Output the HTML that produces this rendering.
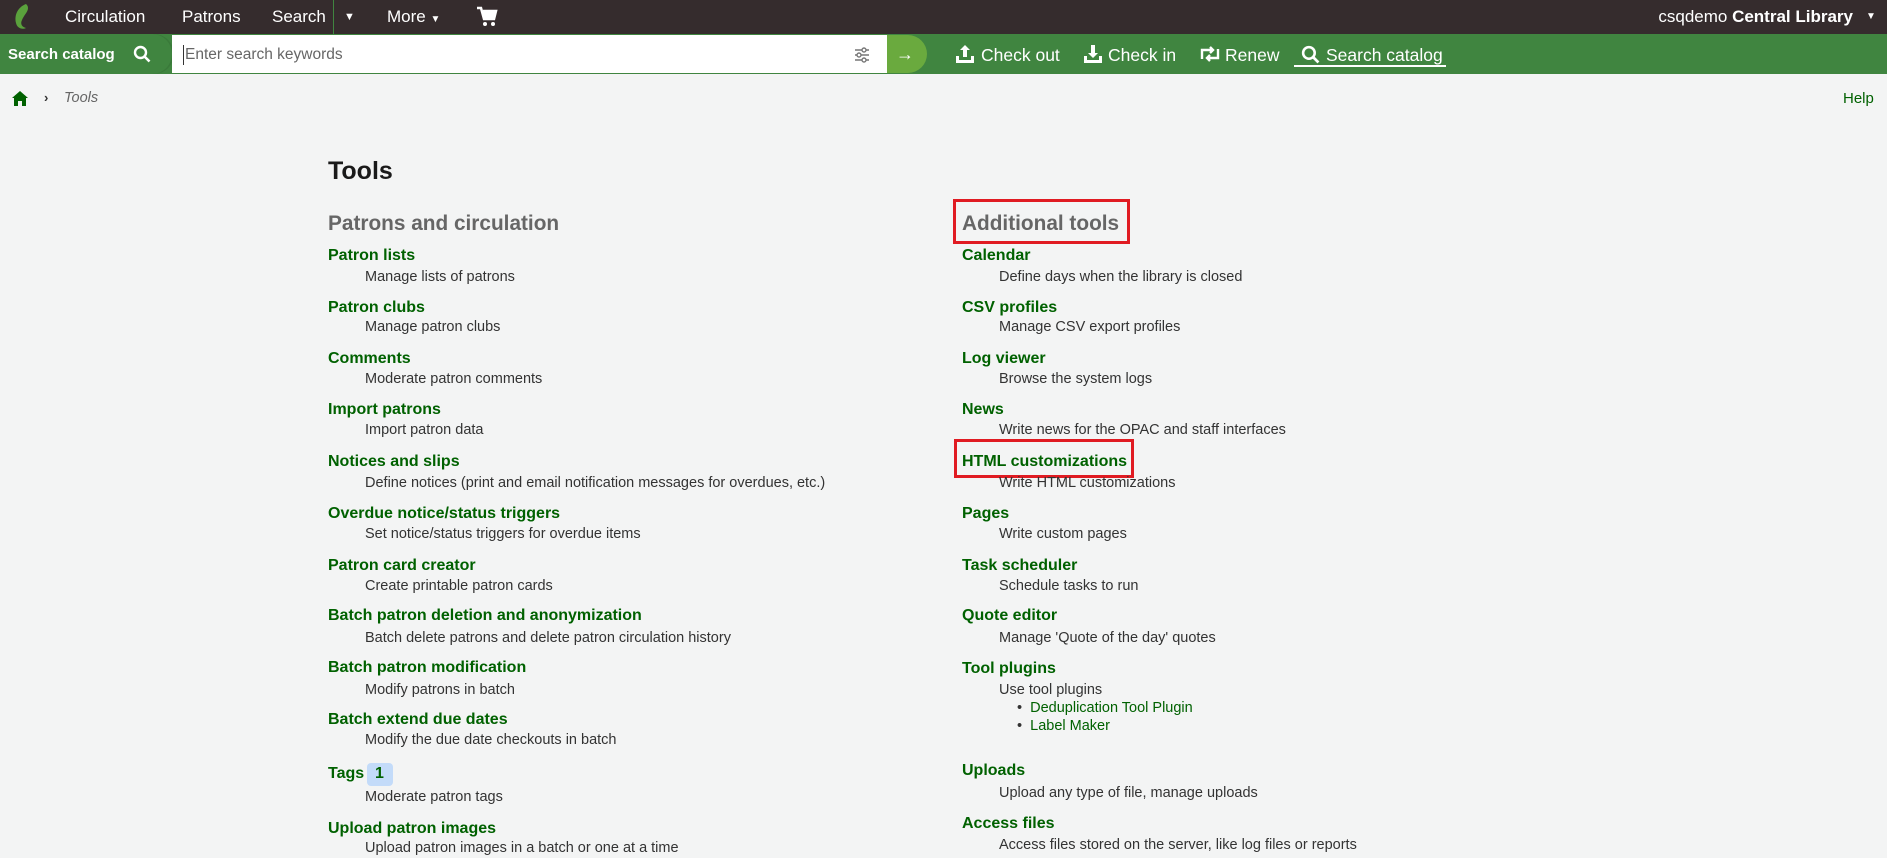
<!DOCTYPE html>
<html><head><meta charset="utf-8"><style>
*{margin:0;padding:0;box-sizing:border-box}
body{width:1887px;height:857px;overflow:hidden;background:#f3f4f4;font-family:"Liberation Sans",sans-serif;position:relative}
.a{position:absolute;white-space:nowrap;line-height:20px}
.top{position:absolute;left:0;top:0;width:1887px;height:34px;background:#352c2d}
.nav{color:#fff;font-size:17px;top:4px;line-height:26px}
.green{position:absolute;left:0;top:34px;width:1887px;height:40px;background:#408540}
.l{color:#006100;font-weight:bold;font-size:16px}
.d{color:#333;font-size:14.5px}
.red{position:absolute;border:3px solid #e01b22}
</style></head><body>
<div class="top"></div>
<svg class="a" style="left:12px;top:3px" width="22" height="28" viewBox="0 0 22 28"><path d="M14 1C6 4 2 12 4 20c1 5 6 7 10 5-4-1-6-4-4-8 2-5 6-8 6-12 0-2-1-3-2-4z" fill="#5aa13c"/></svg>
<div class="a nav" style="left:65px">Circulation</div>
<div class="a nav" style="left:182px">Patrons</div>
<div class="a nav" style="left:272px">Search</div>
<div style="position:absolute;left:333px;top:0;width:1px;height:34px;background:#408540"></div>
<div class="a nav" style="left:344px;font-size:11px">▼</div>
<div class="a nav" style="left:387px">More <span style="font-size:10px">▼</span></div>
<svg class="a" style="left:476px;top:6px" width="22" height="22" viewBox="0 0 22 22"><path d="M1 2h4l3 11h10l2-8H7" fill="none" stroke="#fff" stroke-width="2.5"/><rect x="7" y="5" width="12" height="7" fill="#fff"/><circle cx="9" cy="18" r="2" fill="#fff"/><circle cx="17" cy="18" r="2" fill="#fff"/></svg>
<div class="a nav" style="right:34px">csqdemo <b>Central Library</b></div>
<div class="a nav" style="left:1866px;font-size:10px">▼</div>

<div class="green"></div>
<div style="position:absolute;left:0;top:34px;width:172px;height:40px;background:#408540;border-radius:0 20px 20px 0;box-shadow:2px 0 0 #3a7a3a"></div>
<div class="a" style="left:8px;top:45px;color:#fff;font-weight:bold;font-size:15px">Search catalog</div>
<svg class="a" style="left:133px;top:45px" width="18" height="18" viewBox="0 0 18 18"><circle cx="7.5" cy="7.5" r="5.5" fill="none" stroke="#fff" stroke-width="2.4"/><path d="M11.5 11.5l5 5" stroke="#fff" stroke-width="2.6"/></svg>
<div style="position:absolute;left:172px;top:35px;width:740px;height:38px;background:#fff;border-radius:0 19px 19px 0"></div>
<div style="position:absolute;left:183px;top:45px;width:1px;height:20px;background:#333"></div>
<div class="a" style="left:185px;top:45px;color:#666;font-size:15.5px">Enter search keywords</div>
<svg class="a" style="left:853px;top:46px" width="18" height="18" viewBox="0 0 18 18" stroke="#777" stroke-width="1.4" fill="#fff"><path d="M2 4h14M2 9h14M2 14h14"/><circle cx="11" cy="4" r="2"/><circle cx="6" cy="9" r="2"/><circle cx="11" cy="14" r="2"/></svg>
<div style="position:absolute;left:887px;top:35px;width:40px;height:38px;background:#6aaa3e;border-radius:0 19px 19px 0"></div>
<div class="a" style="left:896px;top:44px;color:#fff;font-size:18px;font-weight:bold">→</div>
<svg class="a" style="left:955px;top:44px" width="20" height="20" viewBox="0 0 20 20" fill="#fff"><path d="M10 1l-5 5h3v7h4V6h3z"/><path d="M1 12h3v4h12v-4h3v7H1z"/></svg>
<div class="a nav" style="left:981px;top:42px;font-size:17.5px">Check out</div>
<svg class="a" style="left:1083px;top:44px" width="20" height="20" viewBox="0 0 20 20" fill="#fff"><path d="M10 14l-5-5h3V1h4v8h3z"/><path d="M1 12h3v4h12v-4h3v7H1z"/></svg>
<div class="a nav" style="left:1108px;top:42px;font-size:17.5px">Check in</div>
<svg class="a" style="left:1199px;top:46px" width="22" height="16" viewBox="0 0 22 16" fill="none" stroke="#fff" stroke-width="2.4"><path d="M3 13V4h10"/><path d="M11 1l3 3-3 3" fill="#fff"/><path d="M19 3v9H9"/><path d="M11 15l-3-3 3-3" fill="#fff"/></svg>
<div class="a nav" style="left:1225px;top:42px;font-size:17.5px">Renew</div>
<svg class="a" style="left:1301px;top:45px" width="19" height="19" viewBox="0 0 18 18"><circle cx="7.5" cy="7.5" r="5.5" fill="none" stroke="#fff" stroke-width="2.4"/><path d="M11.5 11.5l5 5" stroke="#fff" stroke-width="2.6"/></svg>
<div class="a nav" style="left:1326px;top:42px;font-size:17.5px">Search catalog</div>
<div style="position:absolute;left:1294px;top:65px;width:152px;height:2px;background:#fff"></div>

<svg class="a" style="left:12px;top:91px" width="16" height="15" viewBox="0 0 16 15" fill="#006100"><path d="M8 0l8 7h-2v8h-4v-5H6v5H2V7H0z"/></svg>
<div class="a" style="left:44px;top:88px;font-size:13px;color:#333;font-weight:bold">›</div>
<div class="a" style="left:64px;top:88px;font-size:14.5px;color:#666;font-style:italic">Tools</div>
<div class="a" style="left:1843px;top:89px;font-size:15px;color:#006100">Help</div>

<div class="a" style="left:328px;top:156px;font-size:25px;line-height:30px;font-weight:bold;color:#1a1a1a">Tools</div>
<div class="a" style="left:328px;top:211px;font-size:20.8px;line-height:26px;font-weight:bold;color:#666">Patrons and circulation</div>
<div class="a" style="left:962px;top:211px;font-size:20.8px;line-height:26px;font-weight:bold;color:#666">Additional tools</div>
<div class="red" style="left:953px;top:199px;width:177px;height:45px"></div>
<div class="red" style="left:954px;top:439px;width:180px;height:39px"></div>

<div class="a l" style="left:328px;top:246px">Patron lists</div><div class="a d" style="left:365px;top:267px">Manage lists of patrons</div>
<div class="a l" style="left:328px;top:298px">Patron clubs</div><div class="a d" style="left:365px;top:317px">Manage patron clubs</div>
<div class="a l" style="left:328px;top:349px">Comments</div><div class="a d" style="left:365px;top:369px">Moderate patron comments</div>
<div class="a l" style="left:328px;top:400px">Import patrons</div><div class="a d" style="left:365px;top:420px">Import patron data</div>
<div class="a l" style="left:328px;top:452px">Notices and slips</div><div class="a d" style="left:365px;top:473px">Define notices (print and email notification messages for overdues, etc.)</div>
<div class="a l" style="left:328px;top:504px">Overdue notice/status triggers</div><div class="a d" style="left:365px;top:524px">Set notice/status triggers for overdue items</div>
<div class="a l" style="left:328px;top:556px">Patron card creator</div><div class="a d" style="left:365px;top:576px">Create printable patron cards</div>
<div class="a l" style="left:328px;top:606px">Batch patron deletion and anonymization</div><div class="a d" style="left:365px;top:628px">Batch delete patrons and delete patron circulation history</div>
<div class="a l" style="left:328px;top:658px">Batch patron modification</div><div class="a d" style="left:365px;top:680px">Modify patrons in batch</div>
<div class="a l" style="left:328px;top:710px">Batch extend due dates</div><div class="a d" style="left:365px;top:730px">Modify the due date checkouts in batch</div>
<div class="a l" style="left:328px;top:764px">Tags</div>
<div style="position:absolute;left:367px;top:763px;width:26px;height:23px;background:#c3dbf9;border-radius:4px"></div>
<div class="a l" style="left:375px;top:764px">1</div>
<div class="a d" style="left:365px;top:787px">Moderate patron tags</div>
<div class="a l" style="left:328px;top:819px">Upload patron images</div><div class="a d" style="left:365px;top:838px">Upload patron images in a batch or one at a time</div>

<div class="a l" style="left:962px;top:246px">Calendar</div><div class="a d" style="left:999px;top:267px">Define days when the library is closed</div>
<div class="a l" style="left:962px;top:298px">CSV profiles</div><div class="a d" style="left:999px;top:317px">Manage CSV export profiles</div>
<div class="a l" style="left:962px;top:349px">Log viewer</div><div class="a d" style="left:999px;top:369px">Browse the system logs</div>
<div class="a l" style="left:962px;top:400px">News</div><div class="a d" style="left:999px;top:420px">Write news for the OPAC and staff interfaces</div>
<div class="a l" style="left:962px;top:452px">HTML customizations</div><div class="a d" style="left:999px;top:473px">Write HTML customizations</div>
<div class="a l" style="left:962px;top:504px">Pages</div><div class="a d" style="left:999px;top:524px">Write custom pages</div>
<div class="a l" style="left:962px;top:556px">Task scheduler</div><div class="a d" style="left:999px;top:576px">Schedule tasks to run</div>
<div class="a l" style="left:962px;top:606px">Quote editor</div><div class="a d" style="left:999px;top:628px">Manage 'Quote of the day' quotes</div>
<div class="a l" style="left:962px;top:659px">Tool plugins</div><div class="a d" style="left:999px;top:680px">Use tool plugins</div>
<div class="a d" style="left:1017px;top:698px">•&nbsp;&nbsp;<span style="color:#006100">Deduplication Tool Plugin</span></div>
<div class="a d" style="left:1017px;top:716px">•&nbsp;&nbsp;<span style="color:#006100">Label Maker</span></div>
<div class="a l" style="left:962px;top:761px">Uploads</div><div class="a d" style="left:999px;top:783px">Upload any type of file, manage uploads</div>
<div class="a l" style="left:962px;top:814px">Access files</div><div class="a d" style="left:999px;top:835px">Access files stored on the server, like log files or reports</div>
</body></html>
